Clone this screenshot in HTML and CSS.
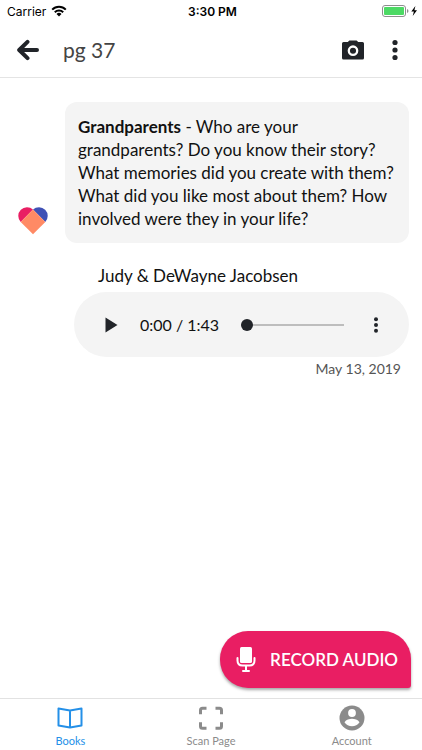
FILE: index.html
```html
<!DOCTYPE html>
<html lang="en">
<head>
    <meta charset="UTF-8">
    <meta name="viewport" content="width=device-width, initial-scale=1.0">
    <title>pg 37</title>
    <link rel="stylesheet" href="styles.css">
</head>
<body>
    <div class="status-bar">
        <div class="carrier">
            <span>Carrier</span>
            <svg width="16" height="12" viewBox="0 0 16 12" fill="none" stroke="#000" stroke-width="2">
                <path d="M1.2 4.6a9.6 9.6 0 0 1 13.6 0"/>
                <path d="M3.8 7.3a5.9 5.9 0 0 1 8.4 0"/>
                <path d="M8 11.6L5.5 9.1a3.5 3.5 0 0 1 5 0z" fill="#000" stroke="none"/>
            </svg>
        </div>
        <div class="clock">3:30 PM</div>
        <div class="battery">
            <svg width="36" height="12" viewBox="0 0 36 12">
                <rect x=".5" y=".5" width="23" height="11" rx="2.5" fill="#fff" stroke="#8e8e8e"/>
                <rect x="2" y="2" width="20" height="8" rx="1" fill="#4cd964"/>
                <path d="M25 4v4q1.5-.6 1.5-2t-1.5-2z" fill="#8e8e8e"/>
                <path d="M33.4 1L29.3 6.6h2.6L30.7 11 35 5.2h-2.6z" fill="#000"/>
            </svg>
        </div>
    </div>

    <header class="header">
        <button class="icon-button" aria-label="Back">
            <svg width="24" height="22" viewBox="0 0 24 22" fill="none" stroke="#212429" stroke-width="4" stroke-linecap="round" stroke-linejoin="round">
                <path d="M11.5 2.8L3.2 11l8.3 8.2M4 11h17"/>
            </svg>
        </button>
        <h1>pg 37</h1>
        <button class="icon-button" aria-label="Camera">
            <svg width="22" height="20" viewBox="0 0 22 20">
                <path d="M7.4.5h7.2l1.6 1.500H20.500a1.500 1.500 0 0 1 1.500 1.500V18a1.500 1.500 0 0 1-1.500 1.500h-19A1.500 1.500 0 0 1 0 18V3.500A1.500 1.500 0 0 1 1.500 2h4.300z" fill="#212429"/>
                <circle cx="11" cy="10.700" r="4.200" fill="none" stroke="#fff" stroke-width="2.300"/>
            </svg>
        </button>
        <button class="icon-button menu-button" aria-label="More options">
            <svg width="6" height="22" viewBox="0 0 6 22" fill="#212429">
                <circle cx="3" cy="3.500" r="2.600"/>
                <circle cx="3" cy="11" r="2.600"/>
                <circle cx="3" cy="18.500" r="2.600"/>
            </svg>
        </button>
    </header>

    <main class="content">
        <div class="prompt">
            <svg class="heart" width="30" height="28" viewBox="0 0 30 28">
                <path d="M2.7 14.900A8.700 8.700 0 0 1 15 2.600z" fill="#e91e63"/>
                <path d="M27.300 14.900A8.700 8.700 0 0 0 15 2.600z" fill="#3f51b5"/>
                <path d="M15 2.600l12.300 12.300L15 27.200 2.700 14.900z" fill="#ff8a65"/>
            </svg>
            <p class="bubble"><strong>Grandparents</strong> - Who are your grandparents? Do you know their story? What memories did you create with them? What did you like most about them? How involved were they in your life?</p>
        </div>

        <section class="recording">
            <h2>Judy &amp; DeWayne Jacobsen</h2>
            <div class="player">
                <button class="icon-button" aria-label="Play">
                    <svg width="13" height="16" viewBox="0 0 13 16">
                        <path d="M.5.500L12.500 8 .5 15.500z" fill="#212429"/>
                    </svg>
                </button>
                <span class="time">0:00 / 1:43</span>
                <input class="seek" type="range" min="0" max="103" value="0" aria-label="Seek">
                <button class="icon-button" aria-label="Recording options">
                    <svg width="4" height="16" viewBox="0 0 4 16" fill="#212429">
                        <circle cx="2" cy="2.300" r="2"/>
                        <circle cx="2" cy="8" r="2"/>
                        <circle cx="2" cy="13.700" r="2"/>
                    </svg>
                </button>
            </div>
            <time class="date" datetime="2019-05-13">May 13, 2019</time>
        </section>

        <button class="record-button">
            <svg width="20" height="26" viewBox="0 0 20 26">
                <rect x="4" y="0" width="12" height="16" rx="1.500" fill="#fff"/>
                <path d="M1.500 11v2.500q0 5 5 5h7q5 0 5-5V11M10 18.500V24M7 24h6" fill="none" stroke="#fff" stroke-width="2" stroke-linecap="round"/>
            </svg>
            <span>RECORD AUDIO</span>
        </button>
    </main>

    <nav class="tabs">
        <a class="tab active" href="#books">
            <svg width="26" height="26" viewBox="0 0 26 26" fill="none" stroke="#2490e8" stroke-width="2" stroke-linejoin="round">
                <path d="M13 5.500L1.500 3.500v17L13 22.500l11.500-2v-17zM13 5.500v17"/>
            </svg>
            <span>Books</span>
        </a>
        <a class="tab" href="#scan">
            <svg width="26" height="26" viewBox="0 0 26 26" fill="none" stroke="#8b8b8b" stroke-width="3">
                <path d="M8.500 3.200H4.500q-2 0-2 2v4M17.500 3.200h4q2 0 2 2v4M8.500 23.200H4.500q-2 0-2-2v-4M17.500 23.200h4q2 0 2-2v-4"/>
            </svg>
            <span>Scan Page</span>
        </a>
        <a class="tab" href="#account">
            <svg width="26" height="26" viewBox="0 0 26 26">
                <circle cx="13" cy="13" r="12.500" fill="#8b8b8b"/>
                <circle cx="13" cy="8" r="3.900" fill="#fff"/>
                <path d="M5.500 17.200c1.500-2.400 5-3.400 7.500-3.400s6 1 7.500 3.400a9 9 0 0 1-15 0z" fill="#fff"/>
            </svg>
            <span>Account</span>
        </a>
    </nav>
</body>
</html>
```

FILE: styles.css
```css
* {
    box-sizing: border-box;
}
body {
    display: flex;
    flex-direction: column;
    min-height: 100vh;
    margin: 0;
    background-color: #fff;
    color: #111;
    font-family: Lato, "Open Sans", sans-serif;
}
h1, h2, p {
    margin: 0;
    font-weight: normal;
}
svg {
    display: block;
    flex-shrink: 0;
}
button {
    border: none;
    cursor: pointer;
    font-family: inherit;
}
.status-bar {
    display: grid;
    grid-template-columns: 1fr auto 1fr;
    align-items: center;
    height: 22px;
    padding: 0 4px 0 7px;
    color: #000;
    font-family: Inter, sans-serif;
    font-size: 12px;
}
.carrier {
    display: flex;
    align-items: center;
    gap: 5px;
}
.clock {
    font-weight: 600;
}
.battery {
    justify-self: end;
}
.header {
    display: flex;
    align-items: center;
    height: 56px;
    padding: 0 16px;
    border-bottom: 1px solid #e4e4e4;
}
.header h1 {
    flex: 1;
    padding-left: 23px;
    color: #444;
    font-size: 21px;
}
.icon-button {
    padding: 0;
    background: none;
}
.menu-button {
    margin: 0 8px 0 28px;
}
.content {
    display: flex;
    flex: 1;
    flex-direction: column;
    padding: 24px 11px 10px 18px;
}
.prompt {
    display: flex;
    align-items: flex-end;
    gap: 17px;
    padding-right: 2px;
}
.heart {
    margin-bottom: 8px;
}
.bubble {
    flex: 1;
    padding: 13px;
    border-radius: 12px;
    background-color: #f4f4f4;
    font-size: 17px;
    line-height: 23px;
}
.recording {
    display: flex;
    flex-direction: column;
    padding: 21px 2px 0 56px;
}
.recording h2 {
    padding-left: 24px;
    font-size: 17px;
    line-height: 24px;
}
.player {
    display: flex;
    align-items: center;
    height: 65px;
    margin-top: 4px;
    padding: 0 31px;
    border-radius: 33px;
    background-color: #f4f4f4;
}
.time {
    margin: 0 22px;
    font-size: 16px;
    white-space: nowrap;
}
.seek {
    flex: 1;
    min-width: 0;
    height: 16px;
    margin: 0 30px 0 0;
    background: none;
    appearance: none;
}
.seek::-webkit-slider-runnable-track {
    height: 2px;
    background-color: #bdbdbd;
}
.seek::-webkit-slider-thumb {
    width: 12px;
    height: 12px;
    margin-top: -5px;
    border-radius: 50%;
    background-color: #212429;
    appearance: none;
}
.date {
    align-self: flex-end;
    padding: 3px 8px 0 0;
    color: #555;
    font-size: 14px;
    line-height: 18px;
}
.record-button {
    display: flex;
    align-items: center;
    align-self: flex-end;
    gap: 14px;
    height: 57px;
    margin-top: auto;
    padding: 0 13px 0 16px;
    border-radius: 28px 28px 3px 28px;
    background-color: #e91e63;
    box-shadow: 0 2px 3px rgba(0, 0, 0, 0.35);
    color: #fff;
    font-size: 17px;
    font-weight: 600;
}
.tabs {
    display: flex;
    height: 52px;
    border-top: 1px solid #e2e2e2;
}
.tab {
    display: flex;
    flex: 1;
    flex-direction: column;
    align-items: center;
    padding-top: 6px;
    color: #8b8b8b;
    font-size: 11px;
    line-height: 20px;
    text-decoration: none;
}
.tab.active {
    color: #2490e8;
}
```
